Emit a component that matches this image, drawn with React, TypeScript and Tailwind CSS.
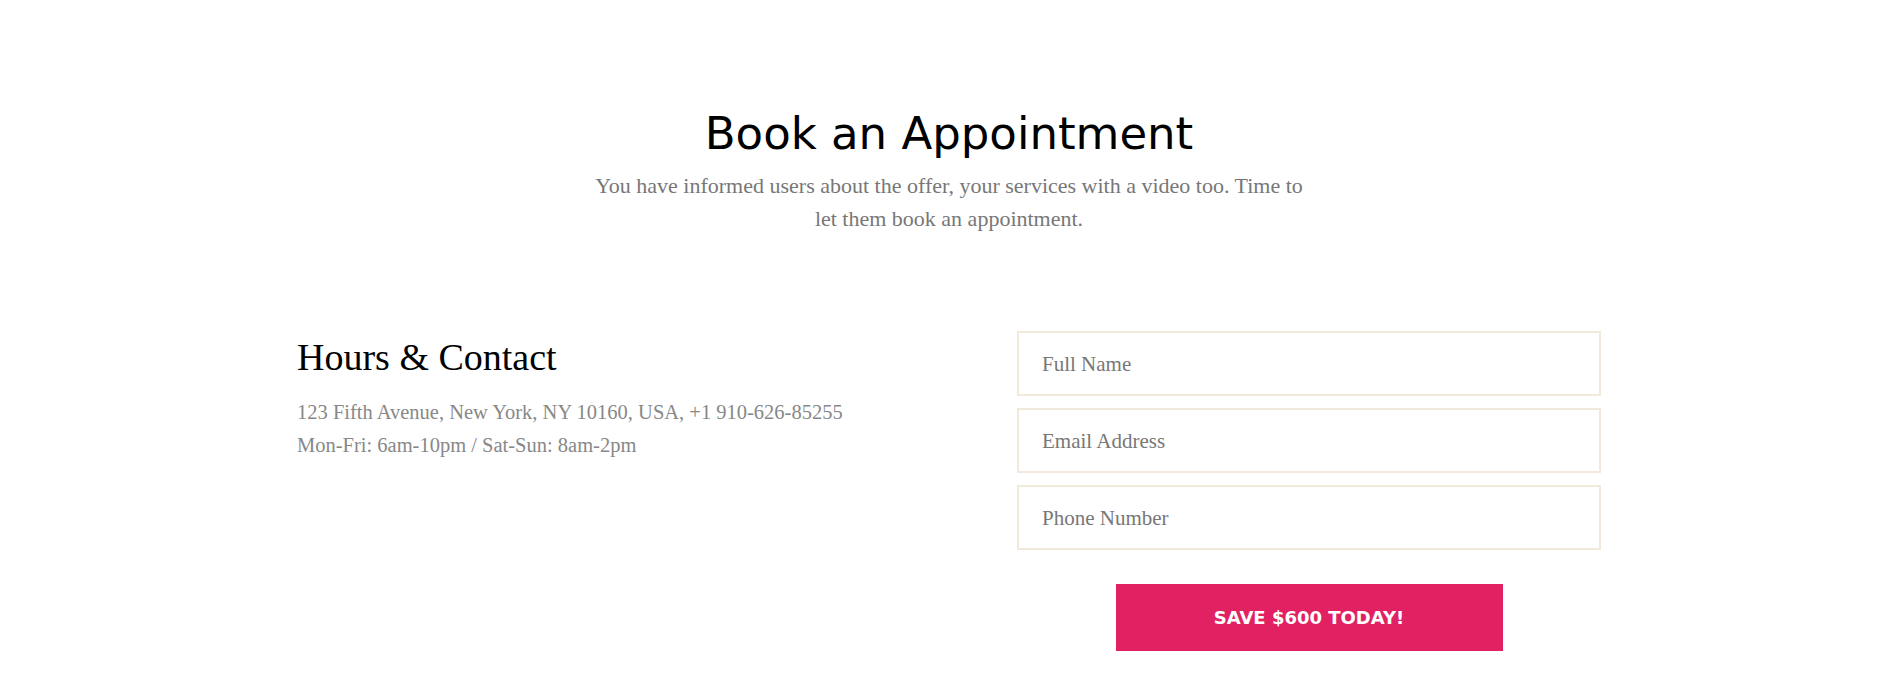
import React from 'react';

const fields = ['Full Name', 'Email Address', 'Phone Number'];

export default function App() {
  return (
    <div className="min-h-screen bg-white">
      {/* Heading */}
      <div className="pt-[106px] text-center">
        <h2 className="font-['DejaVu_Sans',sans-serif] text-[45px] font-normal leading-[56px] text-black">
          Book an Appointment
        </h2>
        <p className="mx-auto mt-[7px] w-[728px] font-['Liberation_Serif',serif] text-[22px] leading-[33px] text-[#777]">
          You have informed users about the offer, your services with a video too. Time to let them book an appointment.
        </p>
      </div>

      {/* Contact + form */}
      <div className="mx-auto mt-[96px] flex w-[1304px] justify-between">
        <div className="w-[600px]">
          <h3 className="font-['Liberation_Serif',serif] text-[38px] leading-[52px] text-black">Hours &amp; Contact</h3>
          <div className="mt-[13px] font-['Liberation_Serif',serif] text-[20.5px] leading-[33px] text-[#888]">
            <p>123 Fifth Avenue, New York, NY 10160, USA, +1 910-626-85255</p>
            <p>Mon-Fri: 6am-10pm / Sat-Sun: 8am-2pm</p>
          </div>
        </div>

        <form className="flex w-[584px] flex-col" onSubmit={(e) => e.preventDefault()}>
          <div className="flex flex-col gap-[12px]">
            {fields.map((f) => (
              <input
                key={f}
                type="text"
                placeholder={f}
                className="h-[65px] w-full border-2 border-[#f1e9da] bg-white px-[23px] pt-[2px] font-['Liberation_Serif',serif] text-[21px] text-[#555] outline-none placeholder:text-[#777]"
              />
            ))}
          </div>
          <button
            type="submit"
            className="mx-auto mt-[34px] h-[67px] w-[387px] bg-[#e22163] font-['DejaVu_Sans',sans-serif] text-[18px] font-bold uppercase text-white"
          >
            Save $600 Today!
          </button>
        </form>
      </div>
    </div>
  );
}
